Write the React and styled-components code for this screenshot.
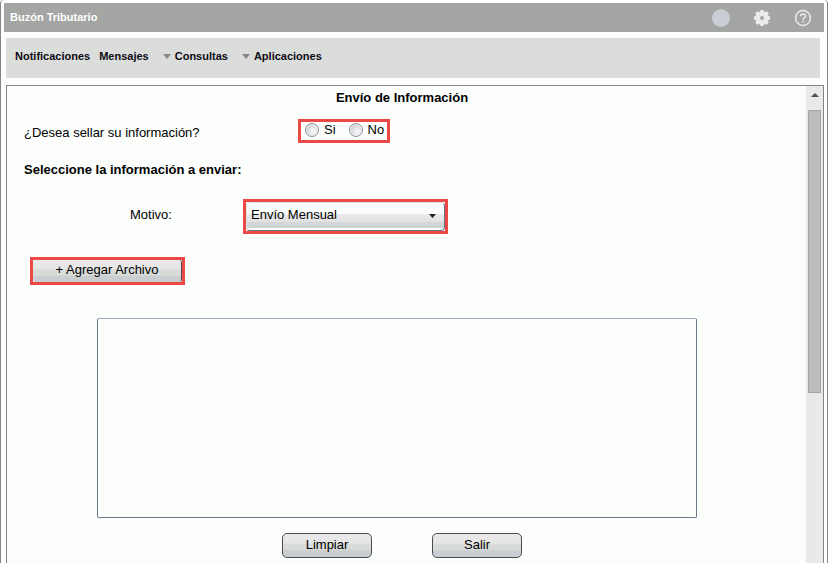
import React, {useState} from 'react';
import styled, {createGlobalStyle} from 'styled-components';

const GlobalStyle = createGlobalStyle`
  * {
    box-sizing: border-box;
  }

  body {
    margin: 0;
    background: #fcfefc;
    color: #000;
    font-family: "Liberation Sans", Arial, sans-serif;
    font-size: 13px;
    line-height: 16px;
  }

  button, select, textarea {
    font: inherit;
    color: inherit;
  }
`;

const Window = styled.div`
  display: flex;
  flex-direction: column;
  min-height: 100vh;
  margin-right: 1px;
  padding: 3px 3px 0;
  border: solid #858585;
  border-width: 0 1px;
  border-radius: 4px 4px 0 0;
`;

const Header = styled.header`
  display: flex;
  align-items: center;
  justify-content: space-between;
  height: 29px;
  padding: 0 12px 0 6px;
  background: #a4a6a3;
`;

const AppName = styled.h1`
  margin: 0;
  padding-bottom: 1px;
  color: #fff;
  font-size: 11px;
`;

const HeaderTools = styled.div`
  display: flex;
  align-items: center;
  gap: 23px;
`;

const Avatar = styled.span`
  width: 18px;
  height: 18px;
  border-radius: 50%;
  background: #c9cdd4;
`;

const IconButton = styled.button`
  display: flex;
  width: 18px;
  height: 18px;
  padding: 0;
  border: 0;
  background: none;
`;

const Nav = styled.nav`
  display: flex;
  align-items: center;
  height: 40px;
  margin: 6px 4px 7px 2px;
  padding: 0 9px 4px;
  background: #dbdddb;
`;

const NavLink = styled.a`
  display: flex;
  align-items: center;
  gap: 4px;
  margin-right: ${props => props.$wide ? 14 : 9}px;
  color: #0b0b14;
  font-size: 11px;
  font-weight: bold;
  text-decoration: none;
`;

const Panel = styled.main`
  display: flex;
  flex: 1;
  margin-left: 2px;
  border: 1px solid #858585;
  border-bottom: 0;
`;

const Form = styled.form`
  flex: 1;
  min-width: 0;
  padding: 4px 9px 5px 0;
`;

const Title = styled.h2`
  margin: 0 0 13px;
  font-size: 13px;
  text-align: center;
`;

const Row = styled.div`
  display: flex;
  align-items: center;
`;

const Question = styled.span`
  width: 291px;
  padding: 3px 0 0 17px;
`;

const Highlight = styled.div`
  display: flex;
  border: 3px solid #ec4946;
`;

const RadioGroup = styled(Highlight)`
  align-items: center;
  gap: 13px;
  height: 24px;
  padding: 0 3px 2px 4px;
`;

const RadioLabel = styled.label`
  display: flex;
  align-items: center;
  gap: 5px;
`;

const Radio = styled.input`
  appearance: none;
  width: 14px;
  height: 14px;
  margin: 0;
  border: 1px solid #8c9096;
  border-radius: 50%;
  background: radial-gradient(circle at 60% 60%, #f2f3f4 20%, #c3c7cc 75%);
  box-shadow: inset 0 0 0 1px #f6f7f8;

  &:checked {
    background: radial-gradient(circle, #333 30%, #d9dcdf 35%);
  }
`;

const SectionTitle = styled.h3`
  margin: 19px 17px 21px;
  font-size: 13px;
`;

const FieldLabel = styled.label`
  width: 236px;
  padding: 0 0 4px 123px;
`;

const SelectBox = styled(Highlight)`
  position: relative;
  width: 205px;
  height: 35px;
`;

const Select = styled.select`
  appearance: none;
  width: 100%;
  padding: 0 24px 3px 4px;
  border: 1px solid #dfe3e6;
  border-right-color: #5f7488;
  border-bottom-color: #5f7488;
  border-radius: 4px;
  background: linear-gradient(#fcfefc 42%, #e9eae9 42%, #e0e1e0 70%, #d6d9d8 70%, #cdd1d3 92%, #fcfefc 92%);
`;

const SelectArrow = styled.svg`
  position: absolute;
  top: 12px;
  right: 9px;
  pointer-events: none;
`;

const Button = styled.button`
  width: 90px;
  height: 25px;
  padding: 0 0 2px;
  border: 1px solid #4c4c50;
  border-radius: 5px;
  background: linear-gradient(#ece9ec, #e3e5e3 42%, #dadcda 44%, #d8dad8 70%, #cbcfd2 72%, #c8cdd1);
`;

const AddBox = styled(Highlight)`
  width: 155px;
  margin: 23px 0 33px 23px;
`;

const AddButton = styled(Button)`
  width: 100%;
  height: 22px;
  border-width: 0 1px 0 0;
  border-radius: 3px;
`;

const FileList = styled.textarea`
  display: block;
  width: calc(100% - 190px);
  height: 200px;
  margin: 0 0 15px 90px;
  border: 1px solid #66788a;
  border-top-color: #a2a9b8;
  border-radius: 2px;
  background: #fcfefc;
  resize: none;
`;

const Actions = styled.div`
  display: flex;
  justify-content: center;
  gap: 60px;
`;

const Scrollbar = styled.div`
  display: grid;
  grid-template-rows: 24px 5fr 3fr;
  width: 17px;
  padding: 0 2px;
  background: #ebe8ea;
`;

const ScrollUp = styled.button`
  display: flex;
  justify-content: center;
  padding: 7px 0 0;
  border: 0;
  background: none;
`;

const ScrollThumb = styled.div`
  border: 1px solid #a3a6a4;
  background: #babdba;
`;

const GearIcon = () => (
  <svg width="18" height="18" viewBox="0 0 18 18" fill="#e9ece9">
    <circle cx="9" cy="9" r="6.5"/>
    {[0, 45, 90, 135].map(angle => (
      <rect key={angle} x="7.1" y="1" width="3.8" height="16" rx="0.8" transform={`rotate(${angle} 9 9)`}/>
    ))}
    <circle cx="9" cy="9" r="2" fill="#a4a6a3"/>
  </svg>
);

const HelpIcon = () => (
  <svg width="18" height="18" viewBox="0 0 18 18" fill="none" stroke="#e9ece9" strokeWidth="1.5">
    <circle cx="9" cy="9" r="7.4"/>
    <path d="M6.6 7.3C6.6 4.2 11.5 4.3 11.5 7c0 1.8-2.4 1.7-2.4 3.7"/>
    <path d="M9.1 11.8v1.7"/>
  </svg>
);

const NavArrow = () => (
  <svg width="8" height="5" viewBox="0 0 8 5" fill="#858885">
    <path d="M0 0h8L4 5z"/>
  </svg>
);

const menu = [
  {title: 'Notificaciones'},
  {title: 'Mensajes', wide: true},
  {title: 'Consultas', arrow: true, wide: true},
  {title: 'Aplicaciones', arrow: true},
];

const App = () => {
  const [sellar, setSellar] = useState('');
  const [archivos, setArchivos] = useState('');

  return (
    <Window>
      <GlobalStyle/>
      <Header>
        <AppName>Buzón Tributario</AppName>
        <HeaderTools>
          <Avatar/>
          <IconButton type="button" aria-label="Configuración"><GearIcon/></IconButton>
          <IconButton type="button" aria-label="Ayuda"><HelpIcon/></IconButton>
        </HeaderTools>
      </Header>
      <Nav>
        {menu.map(item => (
          <NavLink key={item.title} href="#" $wide={item.wide}>
            {item.arrow && <NavArrow/>}
            {item.title}
          </NavLink>
        ))}
      </Nav>
      <Panel>
        <Form onSubmit={e => e.preventDefault()}>
          <Title>Envío de Información</Title>
          <Row>
            <Question id="sellar">¿Desea sellar su información?</Question>
            <RadioGroup role="radiogroup" aria-labelledby="sellar">
              {['Si', 'No'].map(value => (
                <RadioLabel key={value}>
                  <Radio type="radio" name="sellar" value={value}
                         checked={sellar === value}
                         onChange={e => setSellar(e.target.value)}/>
                  {value}
                </RadioLabel>
              ))}
            </RadioGroup>
          </Row>
          <SectionTitle>Seleccione la información a enviar:</SectionTitle>
          <Row>
            <FieldLabel htmlFor="motivo">Motivo:</FieldLabel>
            <SelectBox>
              <Select id="motivo">
                <option>Envío Mensual</option>
              </Select>
              <SelectArrow width="7" height="4" viewBox="0 0 7 4">
                <path d="M0 0h7L3.5 4z" fill="#222"/>
              </SelectArrow>
            </SelectBox>
          </Row>
          <AddBox>
            <AddButton type="button">+ Agregar Archivo</AddButton>
          </AddBox>
          <FileList aria-label="Archivos" value={archivos} onChange={e => setArchivos(e.target.value)}/>
          <Actions>
            <Button type="button" onClick={() => setArchivos('')}>Limpiar</Button>
            <Button type="button">Salir</Button>
          </Actions>
        </Form>
        <Scrollbar>
          <ScrollUp type="button" aria-label="Subir">
            <svg width="8" height="4" viewBox="0 0 8 4"><path d="M0 4h8L4 0z" fill="#505050"/></svg>
          </ScrollUp>
          <ScrollThumb/>
        </Scrollbar>
      </Panel>
    </Window>
  );
};

export default App;
